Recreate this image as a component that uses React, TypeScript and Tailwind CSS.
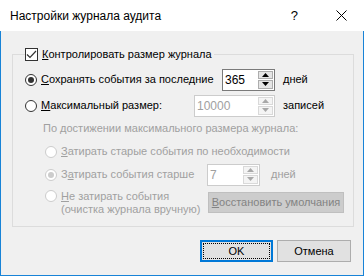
import React from 'react';

const font = "font-['Liberation_Sans',Arial,sans-serif]";

const Radio: React.FC<{ checked?: boolean; disabled?: boolean }> = ({ checked, disabled }) => (
    <span
        className={`flex h-[12px] w-[12px] shrink-0 items-center justify-center rounded-full border bg-white ${
            disabled ? 'border-[#cccccc]' : 'border-[#333333]'
        }`}
    >
        {checked && <span className={`h-[6px] w-[6px] rounded-full ${disabled ? 'bg-[#cccccc]' : 'bg-[#333333]'}`} />}
    </span>
);

const Arrow: React.FC<{ up?: boolean; disabled?: boolean }> = ({ up, disabled }) => (
    <svg width="7" height="4" viewBox="0 0 7 4">
        <polygon
            points={up ? '3.5,0 7,4 0,4' : '0,0 7,0 3.5,4'}
            fill={disabled ? '#a8a8a8' : '#000000'}
        />
    </svg>
);

const Spin: React.FC<{ value: string; width: string; disabled?: boolean }> = ({ value, width, disabled }) => (
    <div
        className={`flex h-[22px] ${width} border bg-white ${disabled ? 'border-[#cccccc]' : 'border-[#7a7a7a]'}`}
    >
        <div className={`flex flex-1 items-center pl-[2px] text-[12px] ${disabled ? 'text-[#a0a0a0]' : 'text-black'}`}>
            {value}
        </div>
        <div className="flex w-[16px] flex-col gap-[1px] py-[1px] pr-[1px]">
            <div
                className={`flex flex-1 items-center justify-center border ${
                    disabled ? 'border-[#d9d9d9] bg-[#f4f4f4]' : 'border-[#adadad] bg-[#e5e5e5]'
                }`}
            >
                <Arrow up disabled={disabled} />
            </div>
            <div
                className={`flex flex-1 items-center justify-center border ${
                    disabled ? 'border-[#d9d9d9] bg-[#f4f4f4]' : 'border-[#adadad] bg-[#e5e5e5]'
                }`}
            >
                <Arrow disabled={disabled} />
            </div>
        </div>
    </div>
);

const App: React.FC = () => {
    return (
        <div className={`flex h-[276px] w-[364px] flex-col bg-white text-[11px] text-black ${font}`}>
            {/* title bar */}
            <div className="flex h-[31px] shrink-0 items-center bg-white pl-[10px]">
                <span className="flex-1 text-[12px]">Настройки журнала аудита</span>
                <span className="mr-[38px] text-[13px]">?</span>
                <svg width="11" height="11" viewBox="0 0 11 11" className="mr-[17px]">
                    <path d="M0.5 0.5 L10.5 10.5 M10.5 0.5 L0.5 10.5" stroke="#000" strokeWidth="1" />
                </svg>
            </div>

            <div className="flex flex-1 flex-col border-x border-b border-[#1883d7] bg-[#f0f0f0]">
                <fieldset className="ml-[11px] mr-[9px] mt-[15px] h-[181px] border border-[#dcdcdc] pl-[12px]">
                    <legend className="flex items-center gap-[4px] pr-[2px]">
                        <span className="flex h-[13px] w-[13px] items-center justify-center border border-[#333333] bg-white">
                            <svg width="11" height="9" viewBox="0 0 11 9">
                                <path d="M1 4.5 L4 7.5 L10 1" stroke="#333" strokeWidth="1.2" fill="none" />
                            </svg>
                        </span>
                        <span>
                            <u>К</u>онтролировать размер журнала
                        </span>
                    </legend>

                    <div className="mt-[6px] flex h-[22px] items-center">
                        <Radio checked />
                        <span className="ml-[4px] w-[181px]">
                            <u>С</u>охранять события за последние
                        </span>
                        <Spin value="365" width="w-[53px]" />
                        <span className="ml-[8px]">дней</span>
                    </div>

                    <div className="mt-[4px] flex h-[22px] items-center">
                        <Radio />
                        <span className="ml-[4px] w-[153px]">
                            <u>М</u>аксимальный размер:
                        </span>
                        <Spin value="10000" width="w-[81px]" disabled />
                        <span className="ml-[8px]">записей</span>
                    </div>

                    <div className="mt-[5px] flex h-[14px] items-center pl-[18px] text-[#a0a0a0]">
                        По достижении максимального размера журнала:
                    </div>

                    <div className="ml-[20px] mt-[9px] flex h-[14px] items-center text-[#a0a0a0]">
                        <Radio disabled />
                        <span className="ml-[4px]">
                            <u>З</u>атирать старые события по необходимости
                        </span>
                    </div>

                    <div className="ml-[20px] mt-[5px] flex h-[22px] items-center text-[#a0a0a0]">
                        <Radio checked disabled />
                        <span className="ml-[4px] w-[146px]">
                            З<u>а</u>тирать события старше
                        </span>
                        <Spin value="7" width="w-[53px]" disabled />
                        <span className="ml-[11px]">дней</span>
                    </div>

                    <div className="ml-[20px] mt-[4px] flex h-[28px] items-start text-[#a0a0a0]">
                        <Radio disabled />
                        <span className="ml-[4px] w-[147px] leading-[13px]">
                            <u>Н</u>е затирать события
                            <br />
                            (очистка журнала вручную)
                        </span>
                        <div className="mt-[2px] flex h-[21px] w-[136px] items-center justify-center border border-[#bfbfbf] bg-[#cccccc] text-[#838383]">
                            <span>
                                <u>В</u>осстановить умолчания
                            </span>
                        </div>
                    </div>
                </fieldset>

                <div className="mr-[12px] mt-[13px] flex justify-end gap-[4px]">
                    <button className="flex h-[22px] w-[73px] border-2 border-[#0078d7] bg-[#e1e1e1] p-[1px]">
                        <span className="flex h-full w-full items-center justify-center border border-dotted border-black">
                            OK
                        </span>
                    </button>
                    <button className="flex h-[22px] w-[74px] items-center justify-center border border-[#adadad] bg-[#e1e1e1]">
                        Отмена
                    </button>
                </div>
            </div>
        </div>
    );
};

export default App;
